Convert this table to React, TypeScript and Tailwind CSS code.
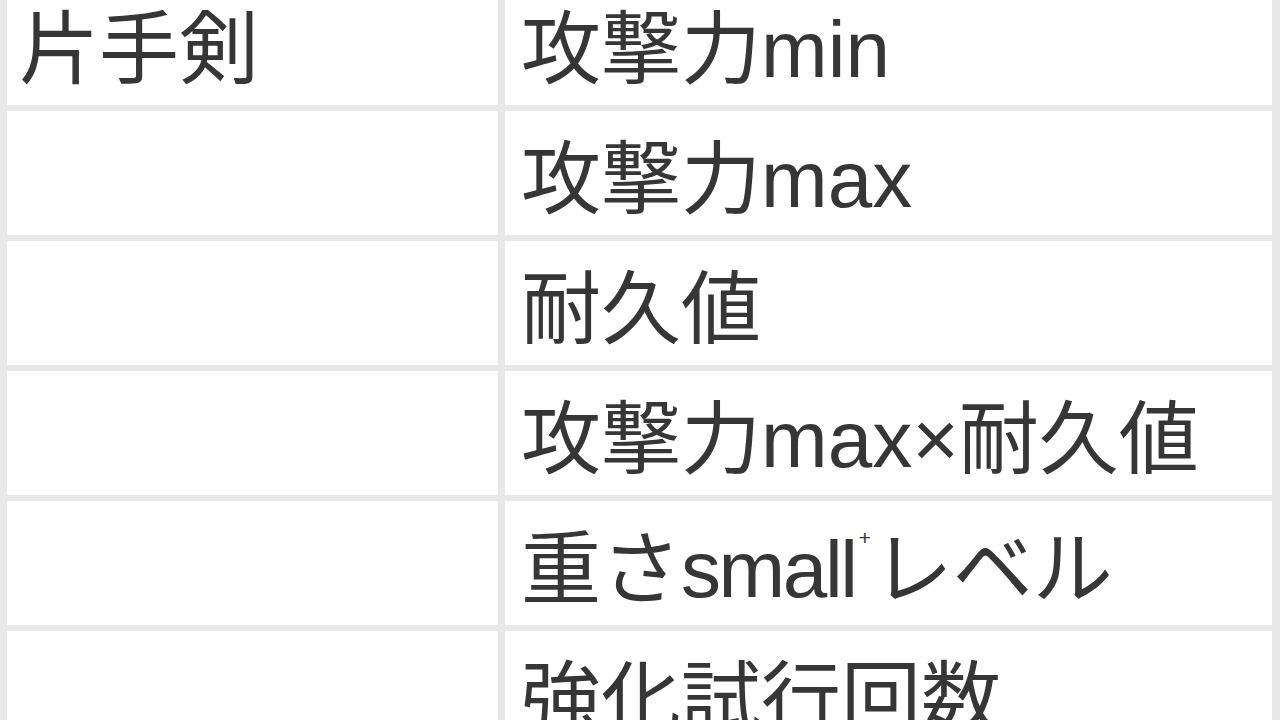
import React from 'react';

// Weapon stat table (zoomed view)
const rows: { weapon: string; stat: React.ReactNode }[] = [
  { weapon: '片手剣', stat: '攻撃力min' },
  { weapon: '', stat: '攻撃力max' },
  { weapon: '', stat: '耐久値' },
  { weapon: '', stat: '攻撃力max×耐久値' },
  {
    weapon: '',
    stat: (
      <>
        重さ<span className="tracking-[-0.03em]">small</span>
        <span className="relative -top-[1.5em] ml-[3px] mr-[2px] text-[0.26em]">+</span>
        レベル
      </>
    ),
  },
  { weapon: '', stat: '強化試行回数' },
];

export default function App() {
  return (
    <div
      className="h-[720px] w-[1280px] overflow-hidden bg-white text-[#363636]"
      style={{ fontFamily: '"Liberation Sans", "Noto Sans CJK JP", sans-serif' }}
    >
      <div className="-mt-[19px] border-l-[7px] border-r-[8px] border-[#e8e8e8]">
        {rows.map((row, i) => (
          <div key={i} className="flex h-[130px] border-b-[6px] border-[#e8e8e8]">
            <div className="flex w-[498px] shrink-0 items-center border-r-[7px] border-[#e8e8e8] pl-[12px] pt-[14px] text-[80px] leading-none">
              {row.weapon}
            </div>
            <div className="flex flex-1 items-center whitespace-nowrap pl-[16px] pt-[14px] text-[80px] leading-none">
              {row.stat}
            </div>
          </div>
        ))}
      </div>
    </div>
  );
}
